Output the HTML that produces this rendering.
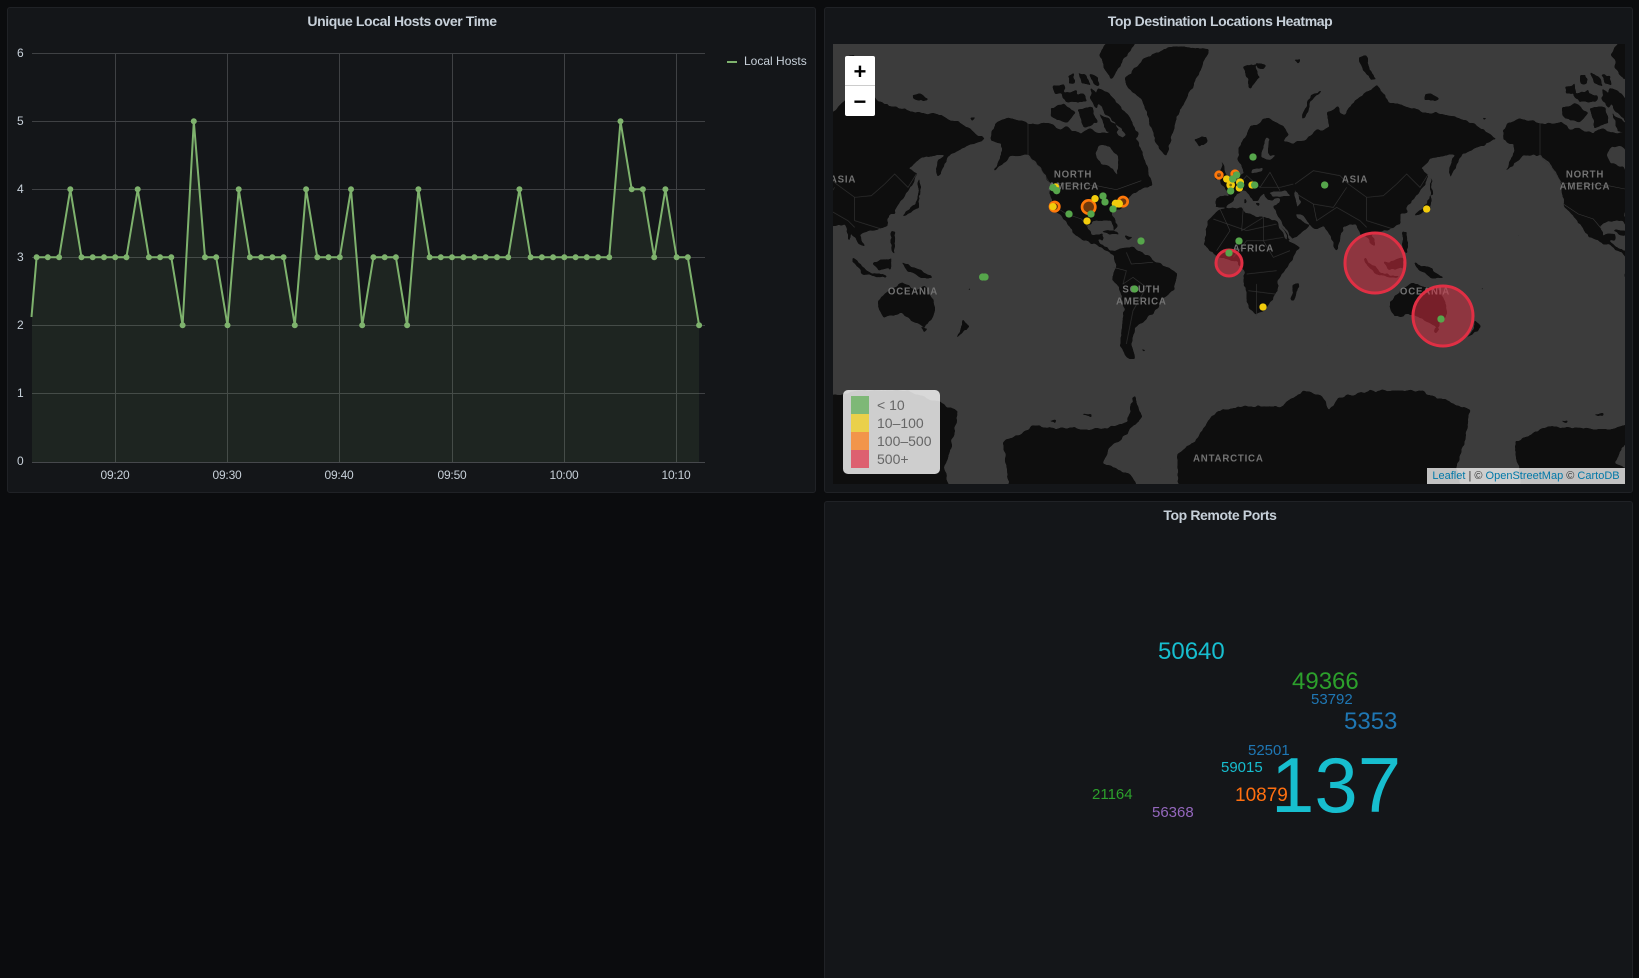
<!DOCTYPE html>
<html><head><meta charset="utf-8"><title>Dashboard</title>
<style>
html,body{margin:0;padding:0;width:1639px;height:978px;overflow:hidden;background:#0b0c0e;font-family:"Liberation Sans",Arial,sans-serif}
#root{position:absolute;left:0;top:0;width:1639px;height:978px;overflow:hidden}
.p{position:absolute;background:#141619;border:1px solid #202226;border-radius:3px;box-sizing:border-box}
.t{position:absolute;width:400px;text-align:center;font-size:14px;font-weight:bold;color:#c7d0d9;line-height:16px;letter-spacing:-.4px;white-space:nowrap}
.l{position:absolute;font-size:12px;color:#c7d0d9;line-height:14px;white-space:nowrap;letter-spacing:-.2px}
.xl{width:60px;text-align:center;top:468px}
.w{position:absolute;white-space:nowrap;line-height:1}
.zb{position:absolute;left:845px;width:30px;height:30px;background:#fff;color:#000;text-align:center;overflow:hidden;font:bold 22px/35px "Liberation Mono",monospace}
.leg{position:absolute;left:843px;top:390px;width:97px;height:84px;background:rgba(255,255,255,.8);border-radius:5px}
.leg i{position:absolute;left:8px;width:18px;height:18px}
.leg b{position:absolute;left:34px;font-weight:normal;font-size:14px;line-height:18px;color:#666;white-space:nowrap}
.att{position:absolute;left:1427px;top:468px;width:198px;height:16px;background:rgba(255,255,255,.75);font-size:11px;line-height:16px;color:#333;text-align:center;white-space:nowrap;overflow:hidden}
.att span{color:#0078a8}
</style></head><body><div id="root">
<div class="p" style="left:7px;top:7px;width:809px;height:486px"></div>
<div class="p" style="left:824px;top:7px;width:809px;height:486px"></div>
<div class="p" style="left:824px;top:501px;width:809px;height:477px;border-bottom:none;border-radius:3px 3px 0 0"></div>
<div class="t" style="left:202px;top:13px">Unique Local Hosts over Time</div>
<div class="t" style="left:1020px;top:13px">Top Destination Locations Heatmap</div>
<div class="t" style="left:1020px;top:507px">Top Remote Ports</div>

<svg style="position:absolute;left:0;top:0" width="820" height="500" viewBox="0 0 820 500">
<g stroke="#3f4144" stroke-width="1" fill="none">
<path d="M32 53.5H705M32 121.5H705M32 189.5H705M32 257.5H705M32 325.5H705M32 393.5H705"/>
<path d="M115.5 53V462M227.5 53V462M339.5 53V462M452.5 53V462M564.5 53V462M676.5 53V462"/>
</g>
<polygon fill="#7eb26d" fill-opacity=".1" points="32,317 36.6,257.3 47.8,257.3 59.1,257.3 70.3,189.3 81.5,257.3 92.7,257.3 104,257.3 115.2,257.3 126.4,257.3 137.7,189.3 148.9,257.3 160.1,257.3 171.3,257.3 182.6,325.3 193.8,121.3 205,257.3 216.2,257.3 227.5,325.3 238.7,189.3 249.9,257.3 261.2,257.3 272.4,257.3 283.6,257.3 294.8,325.3 306.1,189.3 317.3,257.3 328.5,257.3 339.8,257.3 351,189.3 362.2,325.3 373.4,257.3 384.7,257.3 395.9,257.3 407.1,325.3 418.4,189.3 429.6,257.3 440.8,257.3 452,257.3 463.3,257.3 474.5,257.3 485.7,257.3 497,257.3 508.2,257.3 519.4,189.3 530.6,257.3 541.9,257.3 553.1,257.3 564.3,257.3 575.6,257.3 586.8,257.3 598,257.3 609.2,257.3 620.5,121.3 631.7,189.3 642.9,189.3 654.2,257.3 665.4,189.3 676.6,257.3 687.8,257.3 699.1,325.3 699.1,462 32,462"/>
<path d="M32 462.5H705" stroke="#46484c" stroke-width="1"/>
<polyline fill="none" stroke="#7eb26d" stroke-width="2" points="31.5,317 36.6,257.3 47.8,257.3 59.1,257.3 70.3,189.3 81.5,257.3 92.7,257.3 104,257.3 115.2,257.3 126.4,257.3 137.7,189.3 148.9,257.3 160.1,257.3 171.3,257.3 182.6,325.3 193.8,121.3 205,257.3 216.2,257.3 227.5,325.3 238.7,189.3 249.9,257.3 261.2,257.3 272.4,257.3 283.6,257.3 294.8,325.3 306.1,189.3 317.3,257.3 328.5,257.3 339.8,257.3 351,189.3 362.2,325.3 373.4,257.3 384.7,257.3 395.9,257.3 407.1,325.3 418.4,189.3 429.6,257.3 440.8,257.3 452,257.3 463.3,257.3 474.5,257.3 485.7,257.3 497,257.3 508.2,257.3 519.4,189.3 530.6,257.3 541.9,257.3 553.1,257.3 564.3,257.3 575.6,257.3 586.8,257.3 598,257.3 609.2,257.3 620.5,121.3 631.7,189.3 642.9,189.3 654.2,257.3 665.4,189.3 676.6,257.3 687.8,257.3 699.1,325.3"/>
<path fill="none" stroke="#7eb26d" stroke-width="6" stroke-linecap="round" d="M36.6 257.3h0M47.8 257.3h0M59.1 257.3h0M70.3 189.3h0M81.5 257.3h0M92.7 257.3h0M104 257.3h0M115.2 257.3h0M126.4 257.3h0M137.7 189.3h0M148.9 257.3h0M160.1 257.3h0M171.3 257.3h0M182.6 325.3h0M193.8 121.3h0M205 257.3h0M216.2 257.3h0M227.5 325.3h0M238.7 189.3h0M249.9 257.3h0M261.2 257.3h0M272.4 257.3h0M283.6 257.3h0M294.8 325.3h0M306.1 189.3h0M317.3 257.3h0M328.5 257.3h0M339.8 257.3h0M351 189.3h0M362.2 325.3h0M373.4 257.3h0M384.7 257.3h0M395.9 257.3h0M407.1 325.3h0M418.4 189.3h0M429.6 257.3h0M440.8 257.3h0M452 257.3h0M463.3 257.3h0M474.5 257.3h0M485.7 257.3h0M497 257.3h0M508.2 257.3h0M519.4 189.3h0M530.6 257.3h0M541.9 257.3h0M553.1 257.3h0M564.3 257.3h0M575.6 257.3h0M586.8 257.3h0M598 257.3h0M609.2 257.3h0M620.5 121.3h0M631.7 189.3h0M642.9 189.3h0M654.2 257.3h0M665.4 189.3h0M676.6 257.3h0M687.8 257.3h0M699.1 325.3h0"/>
<path d="M727 62H737" stroke="#7eb26d" stroke-width="2"/>
</svg>
<div class="l" style="left:17px;top:46px">6</div>
<div class="l" style="left:17px;top:114px">5</div>
<div class="l" style="left:17px;top:182px">4</div>
<div class="l" style="left:17px;top:250px">3</div>
<div class="l" style="left:17px;top:318px">2</div>
<div class="l" style="left:17px;top:386px">1</div>
<div class="l" style="left:17px;top:454px">0</div>
<div class="l xl" style="left:85px">09:20</div>
<div class="l xl" style="left:197px">09:30</div>
<div class="l xl" style="left:309px">09:40</div>
<div class="l xl" style="left:422px">09:50</div>
<div class="l xl" style="left:534px">10:00</div>
<div class="l xl" style="left:646px">10:10</div>
<div class="l" style="left:744px;top:54px;letter-spacing:0">Local Hosts</div>

<svg style="position:absolute;left:833px;top:44px" width="791.5" height="440" viewBox="0 0 2374.5 1320">
<defs>
<filter id="sm" filterUnits="userSpaceOnUse" x="-30" y="-30" width="2440" height="1380" color-interpolation-filters="sRGB">
<feTurbulence type="fractalNoise" baseFrequency=".05" numOctaves="2" seed="3" result="n"/>
<feDisplacementMap in="SourceGraphic" in2="n" scale="14" xChannelSelector="R" yChannelSelector="G"/>
<feGaussianBlur stdDeviation="2.2"/>
<feComponentTransfer><feFuncA type="linear" slope="6" intercept="-2.4"/></feComponentTransfer>
</filter>
<g id="land" fill="#0e0e0e">
<path d="M475 262L487 240L520 222L555 228L585 238L620 240L650 235L680 255L700 248L720 262L745 268L770 252L800 268L850 262L880 255L915 290L930 330L945 380L960 428L930 432L895 452L870 490L838 505L850 545L845 562L835 532L792 530L762 546L775 575L808 568L812 590L790 590L830 618L850 622L838 630L790 604L730 577L700 534L655 482L650 420L625 370L590 335L540 335L482 381L510 320L505 300L475 290Z"/>
<path d="M800 30L830 -20L920 -20L870 50L835 110L812 72Z"/>
<path d="M795 130L830 150L880 210L918 270L900 288L850 240L810 200L785 160Z"/>
<path d="M660 128L692 120L695 148L665 152ZM685 150L730 140L738 172L700 172ZM650 190L690 178L728 205L704 235L660 224ZM735 85L760 95L772 125L745 115ZM705 95L722 90L724 120L708 118ZM775 130L800 170L790 195L770 160ZM735 195L778 188L792 235L750 252ZM800 205L845 240L860 262L820 262ZM725 150L755 150L762 170L735 175ZM770 90L795 100L800 125L780 118Z"/>
<path d="M875 100L940 40L1010 10L1130 15L1110 60L1080 130L1040 200L1000 335L975 310L955 250L930 170L880 130Z"/>
<path d="M1085 287L1120 278L1125 295L1100 305Z"/>
<path d="M800 560L835 558L862 572L830 574ZM868 573L902 578L885 587Z"/>
<path d="M838 630L860 612L900 610L950 640L1000 668L1036 688L1020 740L985 770L960 810L905 850L895 900L908 945L878 938L862 900L875 800L865 750L838 700L850 660Z"/>
<path d="M925 913L940 917L930 923ZM405 735L415 730L412 738ZM518 572L524 575L520 578Z"/>
<path d="M510 1195L560 1170L605 1145L660 1150L740 1155L800 1155L880 1135L900 1060L940 1012L905 1055L925 1120L880 1170L830 1210L810 1260L890 1290L925 1345L1040 1345L1030 1235L1085 1190L1120 1140L1145 1105L1200 1090L1290 1085L1340 1090L1410 1040L1470 1060L1490 1100L1520 1060L1610 1040L1680 1040L1760 1040L1840 1070L1911 1100L1900 1170L1870 1270L1890 1345L530 1345Z"/>
<path d="M745 1112L775 1108L772 1118ZM640 1132L670 1130L668 1138Z"/>
<g transform="translate(1041 0)">
<path d="M105 490L108 460L150 452L128 425L160 420L180 395L195 385L172 345L175 310L215 250L265 222L310 248L325 268L312 290L340 300L372 288L410 260L450 250L440 205L470 190L490 212L530 165L590 125L628 172L690 190L740 205L800 210L880 238L950 285L905 305L850 328L838 345L810 402L805 370L825 330L760 340L722 375L748 388L735 420L700 470L680 492L680 510L662 510L660 540L625 558L575 570L590 610L572 600L550 565L545 590L570 640L545 590L530 540L490 548L470 622L445 565L430 548L400 552L380 525L345 508L365 532L392 545L350 578L325 588L295 520L282 490L298 478L298 465L260 468L250 445L235 470L222 445L236 472L222 472L195 438L170 450L160 470L140 490Z"/>
<path d="M190 70L225 60L240 100L210 130ZM225 55L258 62L250 78L232 72ZM340 48L362 45L352 60ZM535 40L560 35L575 90L592 105L570 108L545 75ZM735 150L755 148L780 165L755 170L735 165ZM905 218L922 222L910 228Z"/>
<path d="M365 225L392 155L435 133L402 158L385 192L375 225Z"/>
<path d="M125 350L135 385L150 420L125 425L120 380ZM105 395L118 388L116 408L104 410ZM190 462L198 462L196 478L190 478ZM228 478L240 478L236 486Z"/>
<path d="M42 285L75 278L85 290L65 305Z"/>
<path d="M750 385L760 450L752 452ZM700 515L740 480L755 440L750 490L712 514Z"/>
<path d="M670 560L682 565L680 630L668 620Z"/>
<path d="M75 570L85 530L120 495L185 490L200 510L250 520L290 530L312 580L360 610L340 640L300 700L290 740L265 790L230 815L205 790L195 720L190 680L170 650L110 640L75 600Z"/>
<path d="M340 720L358 715L345 770L332 770Z"/>
<path d="M555 640L605 688L590 692L550 650ZM612 655L650 645L668 670L630 680ZM580 682L660 696L650 702L585 692ZM652 645L672 640L665 680ZM700 655L745 670L795 702L760 702L720 682Z"/>
<path d="M630 770L660 740L700 715L745 735L770 725L795 770L802 810L770 850L735 830L700 810L645 820L630 790Z"/>
<path d="M760 852L778 852L770 868ZM885 825L905 850L880 870L860 885L880 855Z"/>
<path d="M438 900L445 902L441 906Z"/>
</g>
</g>
<g id="seas" fill="#3c3c3c">
<path d="M785 330L800 305L830 310L855 340L852 395L838 372L800 355Z"/>
<path d="M850 262L868 285L880 275L862 255Z"/>
<ellipse cx="978" cy="1245" rx="18" ry="36" transform="rotate(12 978 1245)"/>
<g transform="translate(1041 0)">
<path d="M268 447L320 440L332 455L280 460Z"/>
<path d="M347 442L362 470L355 492L346 470Z"/>
<path d="M245 340L248 305L262 278L272 285L262 315L268 335L288 332L272 348Z"/>
<path d="M208 388L245 382L248 372L215 378Z"/>
<path d="M285 505L345 592L340 596L281 510Z"/>
</g>
</g>
<g id="bord" fill="none" stroke="#383838" stroke-width="1.8">
<path d="M585 238V335L620 370L650 417L790 425L850 437L925 410M655 480L700 510L745 525L770 555M840 670L880 680L870 720L900 700L940 730L900 800L880 900M880 625L895 660L960 655"/>
<g transform="translate(1041 0)">
<path d="M100 525L200 560L290 540M120 495L150 560L110 620M190 490L185 560L250 520V590L310 580M160 640L200 590L250 590L280 640L330 620M200 690L290 680M205 740L285 750M230 720L230 815"/>
<path d="M170 430L200 395L240 430L270 385L300 440M240 430L300 430L340 420M345 420L400 380L480 395L505 420L560 460L610 455L650 420L680 390L720 430L745 390M345 440L350 450L400 480L460 490L500 430M400 480L410 530L470 490L540 530L560 550M560 460L560 530L640 555"/>
</g>
</g>
</defs>
<rect width="2376" height="1320" fill="#3c3c3c"/>
<g filter="url(#sm)"><use href="#land" x="-1536"/><use href="#land"/><use href="#land" x="1536"/></g>
<g filter="url(#sm)"><use href="#seas" x="-1536"/><use href="#seas"/><use href="#seas" x="1536"/></g>
<use href="#bord" x="-1536"/><use href="#bord"/><use href="#bord" x="1536"/>
<g font-family="'Liberation Sans',sans-serif" font-weight="bold" font-size="29" fill="#737373" text-anchor="middle" letter-spacing="2.4">
<text x="720" y="400">NORTH</text><text x="722" y="436">AMERICA</text>
<text x="2256" y="400">NORTH</text><text x="2256" y="436">AMERICA</text>
<text x="30" y="416">ASIA</text><text x="1566" y="416">ASIA</text>
<text x="240" y="751">OCEANIA</text><text x="1776" y="751">OCEANIA</text>
<text x="925" y="745">SOUTH</text><text x="925" y="781">AMERICA</text>
<text x="1261" y="622">AFRICA</text>
<text x="1186" y="1253">ANTARCTICA</text>
</g>
<g fill="#e02f44" fill-opacity=".5" stroke="#e02f44" stroke-width="9">
<circle cx="1626" cy="657" r="90"/><circle cx="1830" cy="816" r="90"/><circle cx="1188" cy="657" r="39"/>
</g>
<g fill="#ff780a" fill-opacity=".4" stroke="#ff780a" stroke-width="8">
<circle cx="767" cy="489" r="20"/><circle cx="665" cy="488" r="14"/><circle cx="870" cy="473" r="14"/><circle cx="1158" cy="393" r="10"/><circle cx="1206" cy="390" r="10"/>
</g>
<g fill="#f2cc0c">
<circle cx="660" cy="488" r="11"/><circle cx="668" cy="428" r="10"/><circle cx="786" cy="464" r="11"/><circle cx="762" cy="531" r="11"/><circle cx="848" cy="479" r="12"/><circle cx="858" cy="479" r="12"/>
<circle cx="1181" cy="405" r="11"/><circle cx="1193" cy="423" r="13"/><circle cx="1221" cy="415" r="12"/><circle cx="1219" cy="432" r="11"/><circle cx="1257" cy="423" r="11"/><circle cx="1290" cy="789" r="11"/><circle cx="1781" cy="495" r="11"/>
</g>
<circle cx="1193" cy="423" r="4" fill="#7a6a10"/>
<g fill="#56a64b">
<circle cx="660" cy="431" r="11"/><circle cx="671" cy="440" r="11"/><circle cx="708" cy="510" r="11"/><circle cx="774" cy="510" r="11"/><circle cx="810" cy="456" r="11"/><circle cx="816" cy="474" r="11"/><circle cx="840" cy="495" r="11"/><circle cx="924" cy="591" r="11"/><circle cx="905" cy="735" r="11"/><circle cx="449" cy="699" r="11"/><circle cx="456" cy="699" r="11"/>
<circle cx="1211" cy="393" r="11"/><circle cx="1199" cy="405" r="11"/><circle cx="1193" cy="441" r="11"/><circle cx="1223" cy="423" r="11"/><circle cx="1265" cy="423" r="11"/><circle cx="1260" cy="339" r="11"/><circle cx="1475" cy="423" r="11"/><circle cx="1218" cy="591" r="11"/><circle cx="1188" cy="627" r="11"/><circle cx="1824" cy="825" r="11"/>
</g>
</svg>

<div class="zb" style="top:56px;border-radius:2px 2px 0 0;border-bottom:1px solid #ccc;height:29px">+</div>
<div class="zb" style="top:86px;border-radius:0 0 2px 2px">−</div>
<div class="leg">
<i style="top:6px;background:#7eb877"></i><b style="top:6px">&lt; 10</b>
<i style="top:24px;background:#ead04a"></i><b style="top:24px">10–100</b>
<i style="top:42px;background:#f2954a"></i><b style="top:42px">100–500</b>
<i style="top:60px;background:#dd6070"></i><b style="top:60px">500+</b>
</div>
<div class="att"><span>Leaflet</span> | © <span>OpenStreetMap</span> © <span>CartoDB</span></div>

<div class="w" style="left:1158px;top:640px;font-size:24px;color:#17becf">50640</div>
<div class="w" style="left:1292px;top:670px;font-size:24px;color:#2ca02c">49366</div>
<div class="w" style="left:1311px;top:692px;font-size:15px;color:#1f77b4">53792</div>
<div class="w" style="left:1344px;top:710px;font-size:24px;color:#1f77b4">5353</div>
<div class="w" style="left:1248px;top:743px;font-size:15px;color:#1f77b4">52501</div>
<div class="w" style="left:1221px;top:760px;font-size:15px;color:#17becf">59015</div>
<div class="w" style="left:1271px;top:746px;font-size:78px;color:#17becf">137</div>
<div class="w" style="left:1235px;top:786px;font-size:19px;color:#ff6f10">10879</div>
<div class="w" style="left:1092px;top:787px;font-size:15px;color:#2ca02c">21164</div>
<div class="w" style="left:1152px;top:805px;font-size:15px;color:#9467bd">56368</div>
</div></body></html>
